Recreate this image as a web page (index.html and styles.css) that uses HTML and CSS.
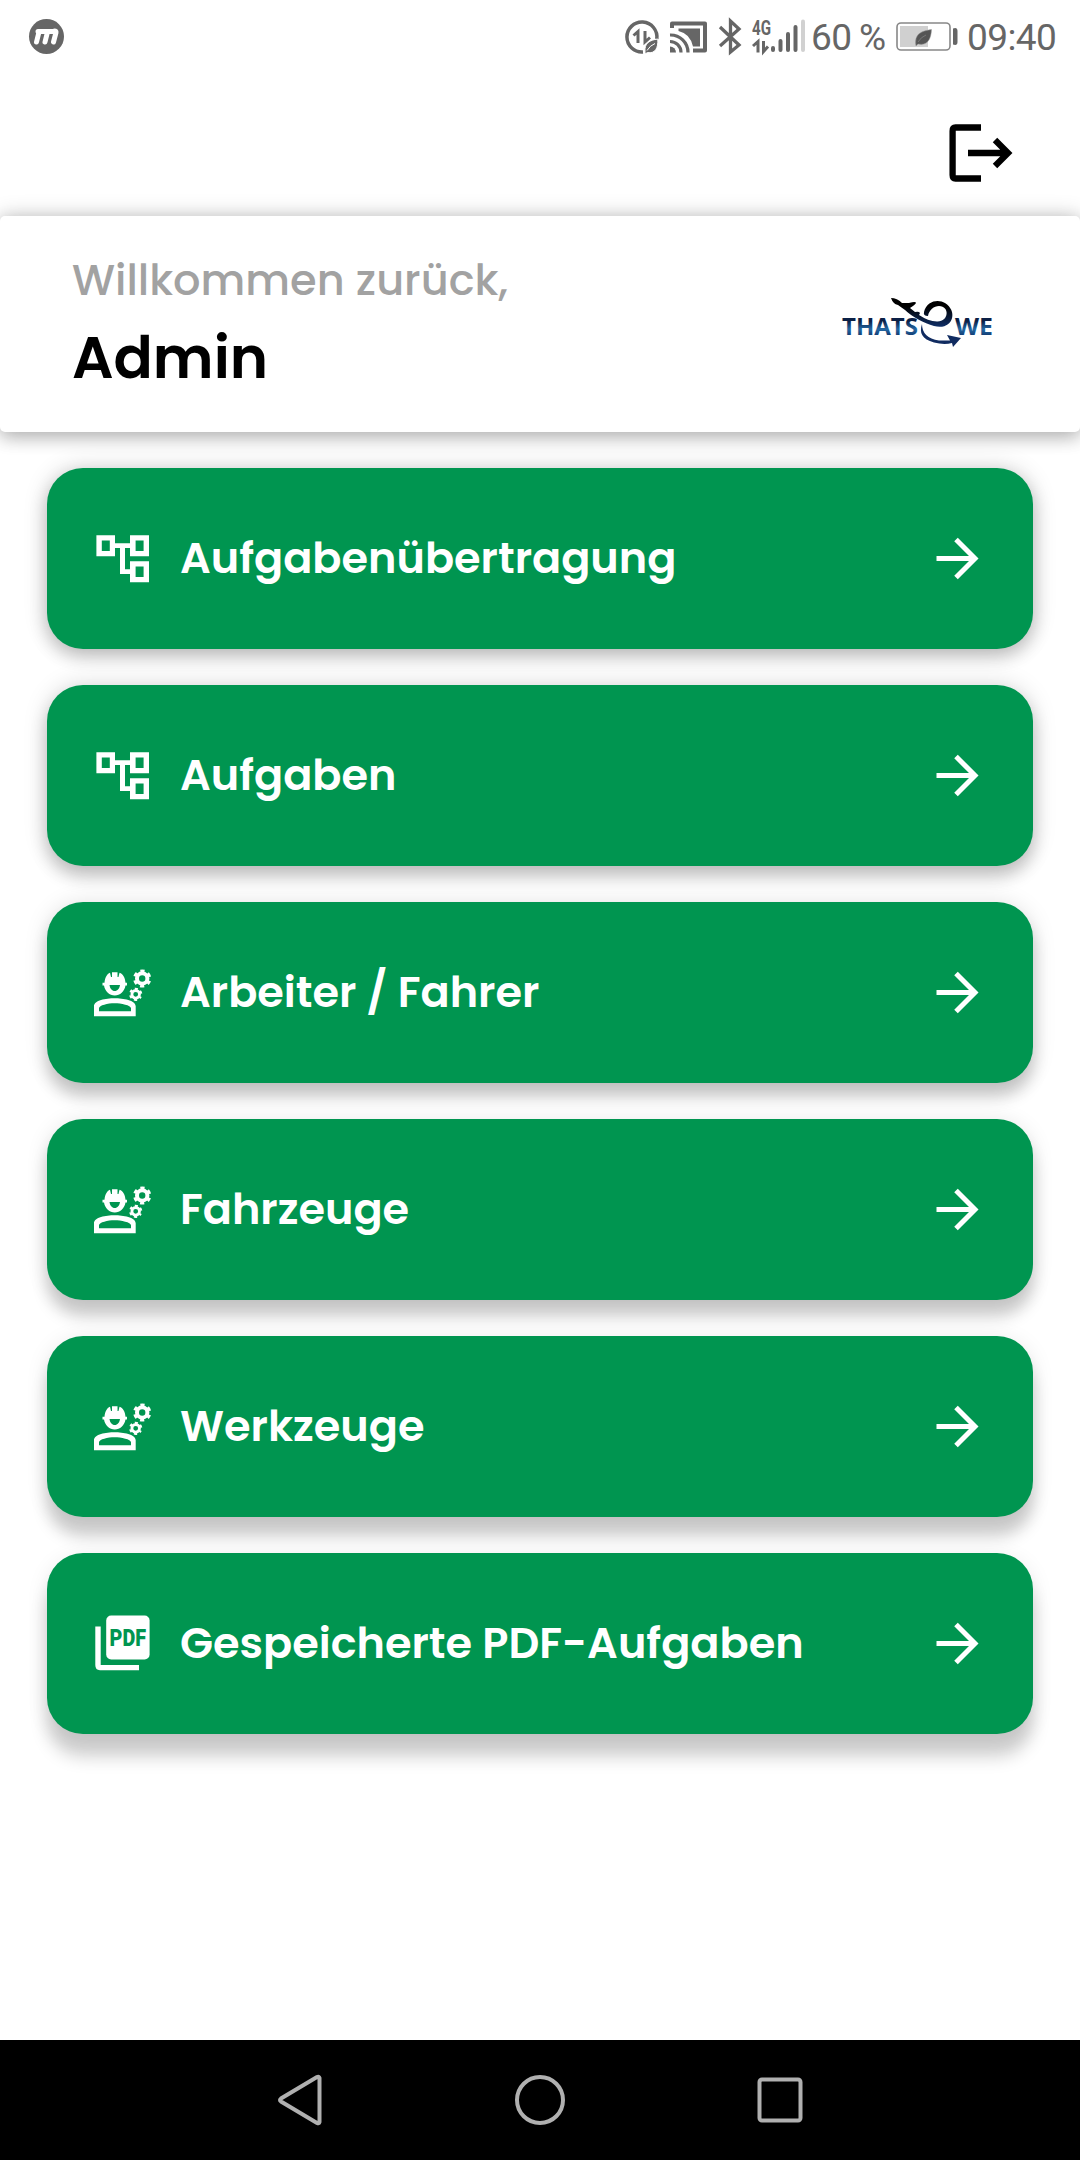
FILE: index.html
```html
<!DOCTYPE html>
<html lang="de">
<head>
<meta charset="utf-8">
<title>Admin</title>
<link rel="stylesheet" href="styles.css">
</head>
<body>
<svg class="defs" aria-hidden="true">
  <defs>
    <symbol id="tree" viewBox="0 0 60 60"><path d="M4.400 6.200h18.600v21H4.400zM9.800 11.500v10.400h8V11.500zM38 6.200h19v21H38zM43.600 11.500v10.400h8V11.500zM38 32.200h19v21H38zM43.600 37.500v10.400h8V37.500z" fill-rule="evenodd"/><path d="M22 14.200h17v4.700H33V40.200h6v4.800H28V18.900h-6z"/></symbol>
    <symbol id="worker" viewBox="0 0 60 60">
      <path fill-rule="evenodd" d="M2 53.300V43.300C2 37.300 14 35.300 22.500 35.300S43.700 37.300 43.700 43.300V53.300ZM7 48.300H39V45.300C39 42.300 29 40.300 22.500 40.300S7 42.300 7 45.300Z"/>
      <path fill-rule="evenodd" d="M10.500 19.700H12.500C13 14.500 15 11 18 9.800L19 14H20V9.300H25.500V14H26.500L27.500 9.800C31 11 33 14.500 33.500 19.700H35V22.500H33.500C32.500 28.500 28 32.500 22.800 32.500S13 28.500 12 22.500H10.500ZM17.500 22C18 25.500 20 28 22.800 28S27.500 25.500 28 22Z"/>
      <g fill="none" stroke="#fff"><circle cx="50.200" cy="15.500" r="5.200" stroke-width="4"/><circle cx="50.200" cy="15.500" r="7.600" stroke-width="3" stroke-dasharray="4 3.960" stroke-dashoffset="2" transform="rotate(30 50.200 15.500)"/>
      <circle cx="43.700" cy="31.300" r="3.800" stroke-width="2.800"/><circle cx="43.700" cy="31.300" r="5.500" stroke-width="2.200" stroke-dasharray="2.900 2.860" stroke-dashoffset="1.450" transform="rotate(30 43.700 31.300)"/></g>
    </symbol>
    <symbol id="pdf" viewBox="0 0 60 60"><rect x="14.200" y="1.500" width="43.400" height="44" rx="5"/><path d="M3.300 12.500H8.700V51H47V56.200H8Q3.300 56.200 3.300 51Z"/><text x="17.600" y="31.500" class="pdf-text" textLength="36.500" lengthAdjust="spacingAndGlyphs">PDF</text></symbol>
    <symbol id="arrow" viewBox="0 0 44 44"><path d="M1.500 21.500H38.500M21 2.500 40 21.500 21 40.500" fill="none" stroke="#fff" stroke-width="5"/></symbol>
    <linearGradient id="word" x1="0" y1="0" x2="0" y2="1"><stop offset="0.350" stop-color="#0b2046"/><stop offset=".6" stop-color="#2469a5"/><stop offset=".85" stop-color="#0d2f63"/></linearGradient>
    <linearGradient id="swoosh" x1="0" y1="0" x2="0" y2="1"><stop offset="0.300" stop-color="#000"/><stop offset="1" stop-color="#102f68"/></linearGradient>
  </defs>
</svg>
<div class="status">
  <svg class="app-badge" viewBox="0 0 36 36"><circle cx="18.500" cy="18.500" r="17.500" fill="#666"/><path d="M8.500 24 11 14M10 13.500H26.500M17 24 19.500 14M25.500 24 28 14.500Q28.300 13 26.500 13" fill="none" stroke="#fff" stroke-width="5" stroke-linecap="round" stroke-linejoin="round"/></svg>
  <svg class="status-icons" viewBox="0 0 200 40" fill="none" stroke="#666">
    <path d="M19 35A15 15 0 1 1 32.800 22" stroke-width="3.500"/><path d="M9.500 18.500 14 14.500V26M21 14V25L26 20.500" stroke-width="3"/>
    <path d="M21 35C20 26 26 23 33.800 22C34.500 31 31 37 23.500 35.500L21 37ZM23 33.500Q26 28.500 31 26.500" fill="#666" stroke="#fff" stroke-width="1"/>
    <path d="M48 11V6.500H81V33.500H69" stroke-width="4" stroke-linejoin="round"/><path d="M54.500 11.500H76V29.500H69Q66 16.500 54.500 14Z" fill="#666" stroke="none"/><path d="M46 18A17.500 17.500 0 0 1 64 35.500M46 24.500A11 11 0 0 1 57 35.500" stroke-width="3.200"/><path d="M46 29.500A6 6 0 0 1 52 35.500H46Z" fill="#666" stroke="none"/>
    <path d="M96 10 115 28 106.500 35V4L115 12 96 29" stroke-width="3.300"/>
    <text x="128" y="17.500" class="network" textLength="19" lengthAdjust="spacingAndGlyphs">4G</text>
    <path d="M129 29 134 24.500V35.500M139.500 24V34.500L144 29.500" stroke-width="3"/>
    <g stroke-linecap="round" stroke-width="4"><path d="M149 31V33M156.500 24V33M164 17V33M171.500 10V33"/><path d="M179 4.500V33" stroke="#d1d1d1"/></g>
  </svg>
  <span class="percent">60 %</span>
  <svg class="battery" viewBox="0 0 62 30"><rect x="1" y="1" width="53" height="27" rx="4" fill="#fff" stroke="#888" stroke-width="1.600"/><path d="M4 4H32V25H4Z" fill="#d0d0d0"/><path d="M57 6.500Q61.500 5 61.500 9V20Q61.500 24 57 22.500Z" fill="#666"/><path d="M20 24C18 12 25 9 35.500 7.500C35 18 31 24 22 22L20 24M22 20Q25 15 30 13" fill="#555" stroke="#999" stroke-width=".5"/></svg>
  <span class="clock">09:40</span>
</div>
<header class="toolbar"><svg class="logout" viewBox="0 0 64 60" fill="none" stroke="#000" stroke-width="6.300"><path d="M32 3.500H6.500Q3.600 3.500 3.600 7V51Q3.600 54.500 6.500 54.500H32M19 29H58M46 16 59 29 46 42"/></svg></header>
<section class="welcome">
  <div><p class="greeting">Willkommen zurück,</p><h1>Admin</h1></div>
  <svg class="logo" viewBox="0 0 154 56" role="img">
    <text x="2" y="38" class="wordmark" fill="url(#word)" textLength="76" lengthAdjust="spacingAndGlyphs">THATS</text><text x="115" y="38" class="wordmark" fill="url(#word)" textLength="38" lengthAdjust="spacingAndGlyphs">WE</text>
    <path d="M51 1Q57 1 62 6L69 6Q76 4 76 6Q75 8 70 11L75 15Q79 14 80 16L79 18Q88 24 97 24.500C109 25 110 9 99 9C94 9 89 13 88 19Q83 19 84 15C87 3 99 2 105 6C119 15 112 34 94 29C84 26 72 20 65 13L58 8Q53 7 51 1Z" fill="url(#swoosh)"/>
    <path d="M82 27Q82 41 99 43.500L110 43.500 107 38 121 41 113 50 112 46Q104 48 94 45.500C82 42 79 36 82 27Z" fill="#102b60"/>
  </svg>
</section>
<main class="menu">
  <a class="item s1"><svg class="icon"><use href="#tree"/></svg><span class="label">Aufgabenübertragung</span><svg class="go"><use href="#arrow"/></svg></a>
  <a class="item s2"><svg class="icon"><use href="#tree"/></svg><span class="label">Aufgaben</span><svg class="go"><use href="#arrow"/></svg></a>
  <a class="item s3"><svg class="icon"><use href="#worker"/></svg><span class="label">Arbeiter / Fahrer</span><svg class="go"><use href="#arrow"/></svg></a>
  <a class="item s4"><svg class="icon"><use href="#worker"/></svg><span class="label">Fahrzeuge</span><svg class="go"><use href="#arrow"/></svg></a>
  <a class="item s5"><svg class="icon"><use href="#worker"/></svg><span class="label">Werkzeuge</span><svg class="go"><use href="#arrow"/></svg></a>
  <a class="item s6"><svg class="icon"><use href="#pdf"/></svg><span class="label">Gespeicherte PDF-Aufgaben</span><svg class="go"><use href="#arrow"/></svg></a>
</main>
<nav class="system-nav">
  <svg viewBox="0 0 52 52"><path d="M45.500 4V48Q45 50 43 49L7 27.500Q5 26 7 24.500L43 3Q45 2 45.500 4Z"/></svg>
  <svg viewBox="0 0 52 52"><circle cx="26" cy="26" r="23"/></svg>
  <svg viewBox="0 0 52 52"><rect x="5.500" y="5.500" width="41" height="41" rx="2.500"/></svg>
</nav>
</body>
</html>
```
FILE: styles.css
```css
* { box-sizing: border-box; }
body { margin: 0; width: 1080px; height: 2160px; background: #fff; font-family: Poppins, Inter, sans-serif; display: flex; flex-direction: column; overflow: hidden; }
.defs { position: absolute; width: 0; height: 0; }
.status { height: 75px; flex: none; display: flex; align-items: flex-start; color: #666; font: 37px/44px Roboto, sans-serif; letter-spacing: -.6px; }
.app-badge { width: 36px; height: 36px; margin: 18px 0 0 28px; flex: none; }
.status-icons { width: 200px; height: 40px; margin: 17px 0 0 560px; flex: none; }
.network { font: bold 21px Roboto, sans-serif; fill: #666; stroke: none; letter-spacing: 0; }
.percent { width: 74px; margin: 16px 0 0 -13px; white-space: nowrap; word-spacing: -1px; }
.battery { width: 62px; height: 30px; margin: 22px 0 0 11px; flex: none; }
.clock { margin: 16px 0 0 9px; }
.toolbar { height: 141px; flex: none; display: flex; justify-content: flex-end; padding: 49px 67px 0 0; }
.logout { width: 64px; height: 60px; }
.welcome { height: 216px; flex: none; background: #fff; border-radius: 5px; display: flex; justify-content: space-between; padding: 0 86px 0 72px; box-shadow: 0 6px 18px rgba(0,0,0,.2), 0 0 22px rgba(0,0,0,.2); }
.greeting { margin: 39px 0 0; font-size: 43.1px; line-height: 50px; font-weight: 500; color: #a2a2a2; }
h1 { margin: 18px 0 0; font-size: 58px; line-height: 70px; font-weight: 600; color: #000; }
.logo { width: 154px; height: 56px; margin-top: 81px; }
.wordmark { font: bold 23px "Open Sans", sans-serif; }
.menu { flex: 1; display: flex; flex-direction: column; gap: 36px; padding: 36px 47px 0; }
.item { height: 181px; flex: none; background: #009550; border-radius: 36px; display: flex; align-items: center; padding: 0 54px 0 45px; color: #fff; }
.s1 { box-shadow: 0 8px 18px rgba(0,0,0,.2), 0 0 24px rgba(0,0,0,.16); }
.s2 { box-shadow: 0 11px 17px rgba(0,0,0,.2), 0 0 24px rgba(0,0,0,.15); }
.s3 { box-shadow: 0 14px 16px rgba(0,0,0,.19), 0 2px 23px rgba(0,0,0,.13); }
.s4 { box-shadow: 0 17px 16px rgba(0,0,0,.18), 0 3px 22px rgba(0,0,0,.11); }
.s5 { box-shadow: 0 20px 16px rgba(0,0,0,.18), 0 4px 22px rgba(0,0,0,.1); }
.s6 { box-shadow: 0 23px 17px rgba(0,0,0,.18), 0 5px 22px rgba(0,0,0,.09); }
.icon { width: 60px; height: 60px; fill: #fff; flex: none; }
.pdf-text { font: 900 23px Roboto, sans-serif; fill: #009550; }
.label { margin: 0 0 2px 28px; flex: 1; font-size: 43px; line-height: 54px; font-weight: 600; white-space: nowrap; }
.go { width: 44px; height: 44px; flex: none; }
.system-nav { height: 120px; flex: none; background: #000; display: flex; align-items: center; justify-content: center; gap: 188px; }
.system-nav svg { width: 52px; height: 52px; fill: none; stroke: #b0b0b0; stroke-width: 4; }
```
